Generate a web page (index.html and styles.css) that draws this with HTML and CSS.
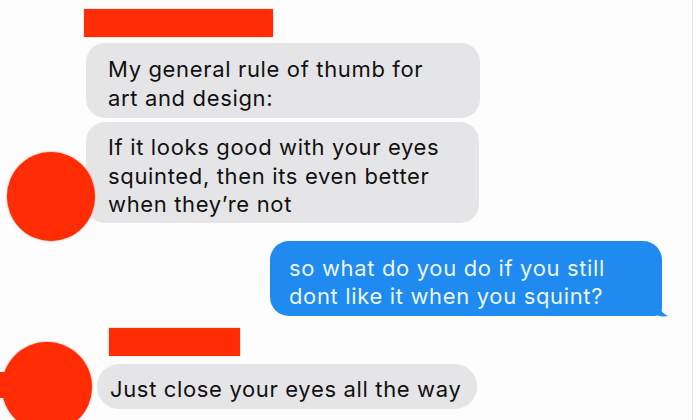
FILE: index.html
```html
<!DOCTYPE html>
<html>
<head>
<meta charset="utf-8">
<link rel="stylesheet" href="styles.css">
</head>
<body>
<div class="screen">
  <div class="name-bar name-bar-first"></div>
  <div class="bubble in b1">My general rule of thumb for<br>art and design:</div>
  <div class="bubble in b2">If it looks good with your eyes<br>squinted, then its even better<br>when they’re not</div>
  <div class="bubble out b3">so what do you do if you still<br>dont like it when you squint?
    <svg class="tail" width="16" height="14" viewBox="0 0 16 14"><path d="M0 0 L8 0 C8 5 10 8 16 11 C10 12 5 11 0 8 Z" fill="#1f8af0"/></svg>
  </div>
  <div class="name-bar name-bar-second"></div>
  <div class="bubble in b4">Just close your eyes all the way</div>

  <div class="avatar avatar-1"></div>
  <div class="avatar avatar-2"></div>
  <div class="nub"></div>
</div>
</body>
</html>
```
FILE: styles.css
```css
html, body {
  margin: 0;
  padding: 0;
  background: #ffffff;
}
.screen {
  position: relative;
  box-sizing: border-box;
  width: 693px;
  height: 420px;
  overflow: hidden;
  background: #fdfdfd;
  border-right: 1px solid #e4e4e4;
  display: flex;
  flex-direction: column;
  align-items: flex-start;
  padding-top: 9px;
  font-family: Inter, "Liberation Sans", sans-serif;
  font-size: 22px;
  letter-spacing: 0.65px;
  line-height: 28.5px;
  color: #111111;
}
.name-bar {
  background: #ff2c04;
  height: 28px;
  box-shadow: 0 0 1px rgba(150, 30, 0, 0.6);
}
.name-bar-first {
  width: 189px;
  margin-left: 84px;
}
.name-bar-second {
  width: 131px;
  height: 28px;
  margin-left: 109px;
  margin-top: 12px;
}
.bubble {
  box-sizing: border-box;
  border-radius: 19px;
  white-space: nowrap;
}
.in {
  background: #e5e5e8;
}
.b1 {
  margin-left: 86px;
  margin-top: 6px;
  width: 394px;
  padding: 12px 22px 6px;
}
.b2 {
  margin-left: 86px;
  margin-top: 4px;
  width: 393px;
  padding: 11px 22px 4px;
}
.out {
  position: relative;
  background: #1f8af0;
  color: #eaf6ff;
  align-self: flex-end;
  margin-right: 30px;
  margin-top: 18px;
  width: 392px;
  padding: 13px 19px 5px;
  border-radius: 19px 19px 8px 19px;
}
.tail {
  position: absolute;
  right: -6px;
  bottom: -3px;
}
.b4 {
  margin-left: 97px;
  margin-top: 8px;
  width: 380px;
  padding: 11px 13px 6px;
  border-radius: 22px;
}
.avatar {
  position: absolute;
  border-radius: 50%;
  background: #ff2c04;
  box-shadow: 0 0 2px rgba(180, 40, 0, 0.6);
}
.avatar-1 {
  left: 7px;
  top: 152px;
  width: 88px;
  height: 89px;
}
.avatar-2 {
  left: 2px;
  top: 342px;
  width: 90px;
  height: 90px;
}
.nub {
  position: absolute;
  left: 0;
  top: 372px;
  width: 10px;
  height: 26px;
  background: #ff2c04;
  border-radius: 0 4px 4px 0;
}
```
